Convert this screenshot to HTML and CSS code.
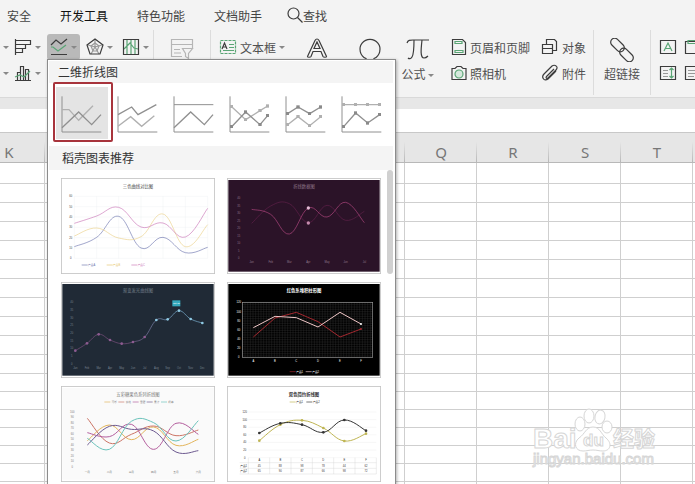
FILE: index.html
```html
<!DOCTYPE html>
<html lang="zh-CN">
<head>
    <meta charset="UTF-8">
    <title>表格 - 插入折线图</title>
    <link rel="stylesheet" href="styles.css">
</head>
<body>
    <nav class="tabs">
        <a href="#">安全</a>
        <a href="#" class="strong">开发工具</a>
        <a href="#">特色功能</a>
        <a href="#">文档助手</a>
        <a href="#" class="search">
            <svg width="16" height="16" viewBox="0 0 16 16"><circle cx="6.500" cy="6.500" r="5.500"/><path d="M10.500 10.500L15.500 15.500"/></svg>查找
        </a>
    </nav>

    <div class="ribbon">
        <div class="group charts">
            <div class="line">
                <button class="tool cut" aria-label="柱形图"><i class="arrow"></i></button>
                <button class="tool" aria-label="条形图">
                    <svg width="18" height="18" viewBox="0 0 18 18"><path d="M1.500 1v16M1.500 2.500h15v4h-15M11.500 6.500v4h-10M8.500 10.500v4h-7"/></svg><i class="arrow"></i>
                </button>
                <button class="tool active" aria-label="折线图">
                    <svg width="18" height="18" viewBox="0 0 18 18"><path class="green" d="M1 9l2 0 5 4 4-3 4-3"/><path d="M1 7l5-5 5 4 6-5M1 16.500h16"/></svg><i class="arrow"></i>
                </button>
                <button class="tool" aria-label="雷达图">
                    <svg width="18" height="18" viewBox="0 0 18 18"><path class="gray" d="M9 1v8l7-2M9 9l4 7M9 9l-4 7M9 9L2 7"/><path class="gray" d="M9 5l4 3-2 5H7L5 8z"/><path d="M9 1l8 6-3 9H4L1 7z"/></svg><i class="arrow"></i>
                </button>
                <button class="tool" aria-label="股价图">
                    <svg width="18" height="18" viewBox="0 0 18 18"><path class="green" d="M5 1v16M9 1v16M13 1v16M2 11l6-6 4 5 4 1"/><path d="M1.500 1.500h15v15h-15z"/></svg><i class="arrow"></i>
                </button>
            </div>
            <div class="line">
                <button class="tool cut" aria-label="饼图"><i class="arrow"></i></button>
                <button class="tool" aria-label="组合图">
                    <svg width="18" height="18" viewBox="0 0 18 18"><path d="M3.500 16V8.500h3V16M6.500 9V2.500h3V16M11.500 16V5.500h3V16M1 16.500h16"/><path class="green" d="M1 13l5-2 4 2 6-6"/></svg><i class="arrow"></i>
                </button>
            </div>
        </div>

        <div class="group slicer">
            <button class="big" aria-label="切片器">
                <svg width="24" height="22" viewBox="0 0 24 22"><path class="pale" d="M12 18.500H1.500v-17h21v9M1.500 6.500h21M4 11.500h6M4 15h7M12.500 10.500h10l-4 5v5l-3-2v-3z"/></svg>
            </button>
        </div>

        <div class="group insert">
            <div class="stack textbox">
                <button class="tool">
                    <svg width="18" height="16" viewBox="0 0 18 16"><path class="green dash" d="M1.500 1.500h15v13h-15z"/><path d="M3 10l2.500-6L8 10M4 8h3"/><path class="green" d="M10 5.500h5M10 8.500h5M4 11.500h11"/></svg>
                    文本框<i class="arrow"></i>
                </button>
            </div>
            <button class="big" aria-label="艺术字">
                <svg width="22" height="22" viewBox="0 0 22 22"><path d="M1.500 18.500L9 2.500c1-2 3-2 4 0l7.500 16c0 1-3 1-3.500 0l-2-5H7l-2 5c-.5 1-3.500 1-3.500 0zM8 10.500h6l-3-6.500zM2 21.500h18"/></svg>
            </button>
            <button class="big" aria-label="符号">
                <svg width="24" height="24" viewBox="0 0 24 24"><path d="M2 22.500h6v-2a10 10 0 1 1 8 0v2h6"/></svg>
            </button>
            <button class="big">
                <svg width="24" height="24" viewBox="0 0 24 24"><path d="M1 5c1-3 3-3 6-3h16M8 2c0 8 0 14-2 17-1 2-3 2-4 1M16 2c-1 9-2 18 2 18 2 0 3-1 4-2"/></svg>
                <span>公式<i class="arrow"></i></span>
            </button>
            <div class="stack pages">
                <button class="tool">
                    <svg width="16" height="18" viewBox="0 0 16 18"><path d="M1.500 1.500h10l3 3v12h-13z"/><path class="green" d="M4 3.500h7v2H4zM4 12.500h8v2H4z"/></svg>
                    页眉和页脚
                </button>
                <button class="tool">
                    <svg width="16" height="16" viewBox="0 0 16 16"><path d="M1 3.500h3l2-2h4l2 2h3v11H1z"/><circle class="lens" cx="8" cy="9" r="4"/></svg>
                    照相机
                </button>
            </div>
            <div class="stack">
                <button class="tool">
                    <svg width="18" height="18" viewBox="0 0 18 18"><path d="M5.500 6V1.500h8l2 2v9H12M1.500 6.500h10v9h-10zM1.500 10.500h10"/></svg>
                    对象
                </button>
                <button class="tool">
                    <svg width="18" height="18" viewBox="0 0 18 18"><path d="M13 5l-7 7c-2 2 0 3 1 2l8-8c3-3-1-6-4-4l-8 8c-3 3 0 8 4 5l8-8"/></svg>
                    附件
                </button>
            </div>
        </div>

        <div class="group link">
            <button class="big">
                <svg width="24" height="24" viewBox="0 0 24 24"><rect x="-8" y="-4" width="16" height="8" rx="4" transform="translate(7.500 7) rotate(45)"/><rect x="-8" y="-4" width="16" height="8" rx="4" transform="translate(16.500 17) rotate(45)"/></svg>
                <span>超链接</span>
            </button>
        </div>

        <div class="group forms">
            <div class="line">
                <button class="tool" aria-label="标签">
                    <svg width="18" height="16" viewBox="0 0 18 16"><path d="M1.500 1.500h15v13h-15z"/><path class="green" d="M5 12l4-8 4 8M6 9.500h6"/></svg>
                </button>
                <button class="tool" aria-label="分组框">
                    <svg width="18" height="16" viewBox="0 0 18 16"><path d="M1.500 2.500h15v12h-15z"/><path class="green" d="M4 1.500h8v3H4z"/></svg>
                </button>
            </div>
            <div class="line">
                <button class="tool" aria-label="滚动条">
                    <svg width="18" height="16" viewBox="0 0 18 16"><path d="M1.500 1.500h15v13h-15z"/><path class="gray" d="M4 5.500h5M4 8.500h5M4 11.500h5"/><path class="green" d="M12.500 3v10M10.500 5l2-2 2 2M10.500 11l2 2 2-2"/></svg>
                </button>
                <button class="tool" aria-label="列表框">
                    <svg width="18" height="16" viewBox="0 0 18 16"><path d="M1.500 1.500h15v13h-15z"/><path class="gray" d="M4 5.500h10M4 8.500h10M4 11.500h6"/></svg>
                </button>
            </div>
        </div>
    </div>

    <div class="formula-bar"></div>

    <div class="sheet">
        <table>
            <thead>
                <tr><th>K</th><th></th><th></th><th></th><th></th><th></th><th>Q</th><th>R</th><th>S</th><th>T</th><th></th></tr>
            </thead>
            <tbody id="rows"></tbody>
        </table>
    </div>

    <svg class="watermark" width="126" height="64" viewBox="0 0 126 64">
        <ellipse cx="47" cy="16" rx="5" ry="7"/>
        <ellipse cx="56" cy="8" rx="5" ry="7"/>
        <ellipse cx="67" cy="9" rx="5" ry="7" transform="rotate(12 67 9)"/>
        <ellipse cx="74" cy="19" rx="5" ry="6"/>
        <path d="M60 19c7 0 8 7 13 11 7 6 4 13-3 13-4 0-6-1-10-1s-6 1-10 1c-8 0-10-8-4-13 6-4 7-11 14-11z"/>
        <text class="brand" x="0" y="40">Bai</text>
        <text class="du" x="50" y="38">du</text>
        <text class="cn" x="80" y="38">经验</text>
        <text class="site" x="0" y="56">jingyan.baidu.com</text>
    </svg>

    <div class="menu">
        <h2>二维折线图</h2>
        <div class="types">
            <button class="type selected" aria-label="折线图">
                <svg viewBox="0 0 156 156"><path class="axis" d="M18 28v107h118"/><path class="light" d="M18 68h21l29 32 43-44"/><path class="dark" d="M18 122l50-47 39 38 28-30"/></svg>
            </button>
            <button class="type" aria-label="堆积折线图">
                <svg viewBox="0 0 156 156"><path class="axis" d="M18 28v107h118"/><path class="dark" d="M18 83l41-23 19 23 55-30"/><path class="light" d="M18 118l38-29 33 29 38-32"/></svg>
            </button>
            <button class="type" aria-label="百分比堆积折线图">
                <svg viewBox="0 0 156 156"><path class="axis" d="M18 28v107h118M18 53h118"/><path class="dark" d="M18 122l50-47 41 38 26-30"/></svg>
            </button>
            <button class="type" aria-label="带数据标记的折线图">
                <svg viewBox="0 0 156 156">
                    <defs>
                        <marker id="dark" markerUnits="userSpaceOnUse" markerWidth="10" markerHeight="10" refX="5" refY="5"><rect width="10" height="10" fill="#8a8a8a" stroke="none"/></marker>
                        <marker id="light" markerUnits="userSpaceOnUse" markerWidth="10" markerHeight="10" refX="5" refY="5"><rect width="10" height="10" fill="#b0b0b0" stroke="none"/></marker>
                    </defs>
                    <path class="axis" d="M18 28v107h118"/><path class="light dots" d="M23 59l42 39 43-27 23-14"/><path class="dark dots" d="M23 119l42-44 43 38 23-27"/>
                </svg>
            </button>
            <button class="type" aria-label="带数据标记的堆积折线图">
                <svg viewBox="0 0 156 156"><path class="axis" d="M18 28v107h118"/><path class="dark dots" d="M23 80l31-20 35 20 33-20"/><path class="light dots" d="M23 113l31-24 35 27 33-27"/></svg>
            </button>
            <button class="type" aria-label="带数据标记的百分比堆积折线图">
                <svg viewBox="0 0 156 156"><path class="axis" d="M18 28v107h118"/><path class="light dots" d="M23 53h36h36h36"/><path class="dark dots" d="M23 119l36-41 36 30 36-25"/></svg>
            </button>
            <div class="mark"></div>
        </div>
        <h2 class="second">稻壳图表推荐</h2>
        <div class="gallery">
            <div class="thumbs" id="thumbs"></div>
            <div class="scrollbar"></div>
        </div>
    </div>

    <script src="charts.js"></script>
</body>
</html>
```

FILE: styles.css
```css
* {
    box-sizing: border-box;
}
body {
    margin: 0;
    height: 100vh;
    overflow: hidden;
    position: relative;
    display: flex;
    flex-direction: column;
    background-color: #f3f3f3;
    font-family: "Liberation Sans", "Noto Sans CJK SC", sans-serif;
    font-size: 12px;
    color: #505050;
}
svg {
    display: block;
    flex: none;
    fill: none;
    stroke: #3c3c3c;
    stroke-width: 1.2;
}
button {
    border: none;
    background: none;
    padding: 0;
    font: inherit;
    color: inherit;
}
.tabs {
    display: flex;
    gap: 29px;
    height: 30px;
    padding-left: 7px;
    align-items: center;
    flex: none;
}
.tabs a {
    color: #444;
    text-decoration: none;
    white-space: nowrap;
}
.tabs .strong {
    color: #111;
}
.tabs .search {
    display: flex;
    align-items: center;
    margin-left: -4px;
}
.ribbon {
    display: flex;
    height: 68px;
    padding-bottom: 2px;
    border-bottom: 1px solid #d9d9d9;
    flex: none;
}
.group {
    flex: none;
    border-right: 1px solid #dcdcdc;
    padding-top: 4px;
}
.line {
    display: flex;
    gap: 3px;
}
.tool {
    display: flex;
    align-items: center;
    gap: 3px;
    height: 26px;
    padding: 0 3px;
    white-space: nowrap;
}
.tool.cut {
    width: 8px;
}
.tool.active {
    background-color: #b9b9b9;
    border-radius: 3px;
}
.arrow {
    display: inline-block;
    border: 3px solid transparent;
    border-top-color: #888;
    border-bottom: 0;
}
.big {
    display: flex;
    flex-direction: column;
    align-items: center;
    gap: 4px;
    padding-top: 4px;
    white-space: nowrap;
}
.big span {
    display: flex;
    align-items: center;
    gap: 2px;
    line-height: 18px;
}
.charts {
    width: 154px;
}
.slicer, .link {
    width: 57px;
    display: flex;
    justify-content: center;
}
.insert {
    width: 383px;
    display: grid;
    grid-template-columns: 85px 42px 64px 31px 105px 1fr;
    align-items: start;
}
.textbox {
    padding-left: 5px;
}
.pages {
    padding-left: 15px;
}
.forms {
    border: none;
    padding-left: 5px;
}
.forms .line {
    gap: 1px;
}
.green {
    stroke: #5aa575;
}
.gray {
    stroke: #999;
}
.pale {
    stroke: #b5b5b5;
}
.dash {
    stroke-dasharray: 3 1;
}
.lens {
    stroke: #5aa575;
    fill: #d5e8dc;
}
.formula-bar {
    height: 35px;
    flex: none;
    background-color: #fff;
    border-top: 11px solid #e7e7e7;
    border-bottom: 1px solid #c8c8c8;
}
.sheet {
    flex: 1;
    min-height: 0;
    overflow: hidden;
    background-color: #fff;
}
.sheet table {
    width: 792px;
    margin-left: -27px;
    table-layout: fixed;
    border-collapse: separate;
    border-spacing: 0;
}
.sheet th {
    height: 30px;
    padding: 8px 0 0;
    background: linear-gradient(to bottom, #e6e6e6 30%, #b8b8b8) right / 1px 100% no-repeat #e6e6e6;
    border-bottom: 1px solid #b8b8b8;
    font-family: "Noto Sans", sans-serif;
    font-size: 15px;
    line-height: 20px;
    font-weight: normal;
    color: #777;
}
.sheet td {
    height: 19px;
    padding: 0;
    border-right: 1px solid #cfcfcf;
    border-bottom: 1px solid #cfcfcf;
}
.sheet tbody tr:first-child td {
    height: 21px;
}
.sheet tbody tr:nth-child(n+12) td {
    height: 18px;
}
.watermark {
    position: absolute;
    right: 36px;
    bottom: 12px;
    fill: #fff;
    stroke: #d6d6d6;
    stroke-width: 1;
    overflow: visible;
    font-family: "Liberation Sans", "Noto Sans CJK SC", sans-serif;
    font-weight: bold;
}
.brand {
    font-size: 28px;
}
.du {
    font-size: 17px;
}
.cn {
    font-size: 21px;
}
.site {
    font-size: 15px;
    font-weight: normal;
}
.menu {
    position: absolute;
    left: 47px;
    top: 59px;
    bottom: -10px;
    width: 349px;
    padding: 1px 2px 0 1px;
    background-color: #fff;
    border: 1px solid #8c8c8c;
    box-shadow: 1px 1px 3px rgba(0, 0, 0, 0.3);
    overflow: hidden;
}
.menu h2 {
    margin: 0;
    padding: 2px 0 0 9px;
    background-color: #f4f4f4;
    font-size: 12px;
    line-height: 20px;
    font-weight: normal;
    color: #333;
}
.menu .second {
    padding-left: 13px;
    line-height: 22px;
}
.types {
    position: relative;
    display: flex;
    gap: 4px;
    padding: 4px 0 7px 7px;
}
.type {
    width: 52px;
    height: 52px;
    flex: none;
}
.type.selected {
    background-color: #e4e4e4;
}
.type svg {
    width: 52px;
    height: 52px;
}
.axis, .dark, .light {
    stroke: #909090;
    stroke-width: 3;
}
.dark {
    stroke-width: 4;
}
.light {
    stroke: #b0b0b0;
    stroke-width: 4;
}
.dark.dots {
    marker-start: url(#dark);
    marker-mid: url(#dark);
    marker-end: url(#dark);
}
.light.dots {
    marker-start: url(#light);
    marker-mid: url(#light);
    marker-end: url(#light);
}
.mark {
    position: absolute;
    left: 4px;
    top: -1px;
    width: 60px;
    height: 60px;
    border: 2px solid #a8343c;
    border-radius: 2px;
}
.gallery {
    display: flex;
    justify-content: space-between;
}
.thumbs {
    display: grid;
    grid-template-columns: 154px 154px;
    gap: 8px 12px;
    padding: 8px 0 0 12px;
}
.thumb svg {
    width: 154px;
    height: 96px;
    stroke-width: 2;
}
.thumb text {
    stroke: none;
    text-anchor: middle;
}
.scrollbar {
    width: 6px;
    height: 104px;
    border-radius: 3px;
    background-color: #d0d0d0;
}
```

FILE: charts.js
```js
// Thumbnails are drawn on a 462 x 288 canvas, points are canvas coordinates
const months = ['Jan', 'Feb', 'Mar', 'Apr', 'May', 'Jun', 'Jul', 'Aug', 'Sep', 'Oct', 'Nov', 'Dec'];
const letters = ['A', 'B', 'C', 'D', 'E', 'F'];

const charts = [
    {
        title: '三色曲线对比图', bg: '#fff', ink: '#444', titleY: 29, size: 13, grid: '#e8ecef',
        plot: [40, 55, 440, 241], x: [40, 107, 173, 240, 306, 373, 440], y: [60, 50, 40, 30, 20, 10, 0], smooth: true, columns: true,
        legend: { y: 264, items: [['产品A', '#7179b0', 84], ['产品B', '#e6c670', 159], ['产品C', '#cb7ab9', 233]] },
        lines: [
            ['#7179b0', [206, 178, 115, 210, 178, 224, 208]],
            ['#ecd28c', [174, 150, 180, 176, 108, 206, 140]],
            ['#cb7ab9', [136, 114, 88, 147, 135, 177, 91]]
        ]
    },
    {
        title: '折线数据图', bg: '#2b1328', ink: '#8e7688', titleY: 29, size: 13, smooth: true,
        plot: [46, 60, 430, 240], x: [74, 131, 187, 244, 300, 356, 412], y: [40, 35, 30, 25, 20, 15, 10, 5, 0],
        labels: months.slice(0, 7), labelY: 255,
        lines: [
            ['#61204a', [136, 84, 77, 134, 82, 127, 100]],
            ['#b24780', [94, 109, 168, 90, 117, 73, 134]]
        ],
        points: [[244, 90, 5, '#e3bad4'], [244, 135, 5, '#c58aad']]
    },
    {
        title: '渐变发光曲线图', bg: '#202a36', ink: '#75808c', titleY: 29, size: 13, smooth: true,
        plot: [43, 61, 430, 245], x: [43, 78, 113, 147, 182, 216, 251, 286, 320, 354, 389, 424], y: [40, 35, 30, 25, 20, 15, 10, 5, 0],
        labels: months, labelY: 261, tip: 'Oct 35',
        lines: [['url(#glow)', [206, 184, 157, 174, 185, 180, 165, 114, 112, 86, 111, 123]]], dots: 4
    },
    {
        title: '红色系堆积柱形图', bg: '#000', ink: '#fff', titleY: 30, size: 13, bold: true, hatch: true,
        plot: [46, 61, 437, 226], x: [79, 144, 208, 273, 339, 402], y: [120, 100, 80, 60, 40, 20, 0],
        labels: letters, labelY: 240,
        legend: { y: 272, items: [['产品1', '#a3282f', 210], ['产品2', '#efc6c6', 258]] },
        lines: [
            ['#a3282f', [165, 108, 91, 119, 165, 141]],
            ['#efc6c6', [137, 103, 107, 135, 91, 126]]
        ],
        thick: 3,
        points: [[402, 126, 3, '#fff'], [402, 141, 3, '#a3282f']]
    },
    {
        title: '五彩糖果色系列折线图', bg: '#fafafa', ink: '#777', titleY: 29, size: 13, smooth: true, thick: 3,
        plot: [45, 77, 435, 243], x: [79, 145, 211, 278, 345, 412], y: [100, 90, 80, 70, 60, 50, 40, 30, 20, 10, 0],
        labels: ['一月', '二月', '三月', '四月', '五月', '六月'], labelY: 260,
        legend: { y: 51, items: [['可乐', '#e3b55c', 152], ['芬达', '#cc7566', 194], ['雪碧', '#b45e9e', 237], ['果汁', '#6d5a90', 279], ['奶茶', '#6bc3bb', 322]] },
        lines: [
            ['#e3b55c', [164, 117, 161, 123, 178, 160]],
            ['#cc7566', [97, 171, 145, 120, 149, 132]],
            ['#b45e9e', [140, 152, 115, 190, 112, 145]],
            ['#6d5a90', [177, 121, 130, 135, 198, 194]],
            ['#6bc3bb', [157, 190, 106, 110, 165, 104]]
        ]
    },
    {
        title: '双色简约折线图', bg: '#fff', ink: '#333', titleY: 29, size: 13, bold: true, smooth: true, grid: '#e6e6e6', dots: 4,
        plot: [64, 78, 448, 215], x: [97, 160, 225, 289, 352, 417], y: [120, 100, 80, 60, 40, 20, 0],
        labels: letters, labelY: 226, thick: 3,
        legend: { y: 51, items: [['产品1', '#bfb553', 210], ['产品2', '#333', 260]] },
        lines: [
            ['#bfb553', [164, 116, 103, 126, 165, 143]],
            ['#333333', [141, 112, 116, 139, 102, 134]]
        ],
        table: [['产品1', 45, 88, 98, 78, 44, 62], ['产品2', 65, 90, 87, 66, 98, 72]]
    }
];

function text(x, y, value, fill, size, weight) {
    return `<text x="${x}" y="${y}" fill="${fill}" font-size="${size}" font-weight="${weight || 'normal'}">${value}</text>`;
}

function rule(x1, y1, x2, y2, color) {
    return `<path d="M${x1} ${y1}L${x2} ${y2}" stroke="${color}" stroke-width="1"/>`;
}

function linePath(xs, ys, smooth) {
    let d = `M${xs[0]} ${ys[0]}`;
    for (let i = 1; i < xs.length; i++) {
        if (!smooth) {
            d += `L${xs[i]} ${ys[i]}`;
            continue;
        }
        const before = Math.max(i - 2, 0);
        const after = Math.min(i + 1, xs.length - 1);
        const x1 = xs[i - 1] + (xs[i] - xs[before]) / 5;
        const y1 = ys[i - 1] + (ys[i] - ys[before]) / 5;
        const x2 = xs[i] - (xs[after] - xs[i - 1]) / 5;
        const y2 = ys[i] - (ys[after] - ys[i - 1]) / 5;
        d += `C${x1} ${y1} ${x2} ${y2} ${xs[i]} ${ys[i]}`;
    }
    return d;
}

function drawChart(c) {
    const [left, top, right, bottom] = c.plot;
    let out = `<rect x="1" y="1" width="460" height="286" fill="#fff" stroke="#c4c4c4" stroke-width="3"/>`;
    out += `<rect x="4" y="6" width="454" height="275" fill="${c.bg}" stroke="none"/>`;
    out += text(231, c.titleY, c.title, c.ink, c.size, c.bold ? 'bold' : 'normal');

    if (c.hatch) {
        for (let x = left; x < right; x += 8) out += rule(x, top, x, bottom, '#3d3d3d');
        for (let y = top; y < bottom; y += 7) out += rule(left, y, right, y, '#3d3d3d');
        out += `<rect x="${left}" y="${top}" width="${right - left}" height="${bottom - top}" stroke="#999"/>`;
    }
    c.y.forEach((value, i) => {
        const y = top + (bottom - top) * i / (c.y.length - 1);
        if (c.grid) out += rule(left, y, right, y, c.grid);
        out += text(left - 11, y + 3, value, c.ink, 8);
    });
    if (c.columns) c.x.forEach(x => { out += rule(x, top, x, bottom, c.grid); });
    (c.labels || []).forEach((label, i) => { out += text(c.x[i], c.labelY, label, c.ink, 8); });

    c.lines.forEach(([color, ys]) => {
        out += `<path d="${linePath(c.x, ys, c.smooth)}" stroke="${color}" stroke-width="${c.thick || 2}"/>`;
        if (c.dots) {
            ys.forEach((y, i) => {
                const fill = c.tip ? (i < 7 ? '#8d5c91' : '#8ec9e3') : color;
                out += `<circle cx="${c.x[i]}" cy="${y}" r="${c.dots}" fill="${fill}" stroke="none"/>`;
            });
        }
    });
    (c.points || []).forEach(([x, y, r, fill]) => {
        out += `<circle cx="${x}" cy="${y}" r="${r}" fill="${fill}" stroke="none"/>`;
    });
    if (c.tip) {
        out += '<defs><linearGradient id="glow"><stop offset="0.4" stop-color="#7d4f7f"/><stop offset="0.8" stop-color="#7db4d6"/></linearGradient></defs>';
        out += '<rect x="334" y="55" width="24" height="18" fill="#35a9bd" stroke="none"/>' + text(346, 67, c.tip, '#fff', 7);
    }
    if (c.legend) {
        c.legend.items.forEach(([name, color, x]) => {
            out += `<path d="M${x - 22} ${c.legend.y - 3}h18" stroke="${color}"/>`;
            out += text(x + 8, c.legend.y, name, c.columns ? color : c.ink, 8);
        });
    }
    if (c.table) {
        for (let x = left; x <= right; x += 64) out += rule(x, bottom, x, 264, '#ccc');
        c.table.forEach((row, r) => {
            const y = 230 + r * 17;
            out += rule(left - 26, y, right, y, '#ccc');
            out += text(50, y + 12, row[0], c.ink, 8);
            row.slice(1).forEach((value, i) => { out += text(c.x[i], y + 12, value, c.ink, 8); });
        });
        out += rule(left - 26, 264, right, 264, '#ccc');
    }
    return `<button class="thumb" aria-label="${c.title}"><svg viewBox="0 0 462 288">${out}</svg></button>`;
}

document.getElementById('thumbs').innerHTML = charts.map(drawChart).join('');
document.getElementById('rows').innerHTML = ('<tr>' + '<td></td>'.repeat(11) + '</tr>').repeat(60);
```
